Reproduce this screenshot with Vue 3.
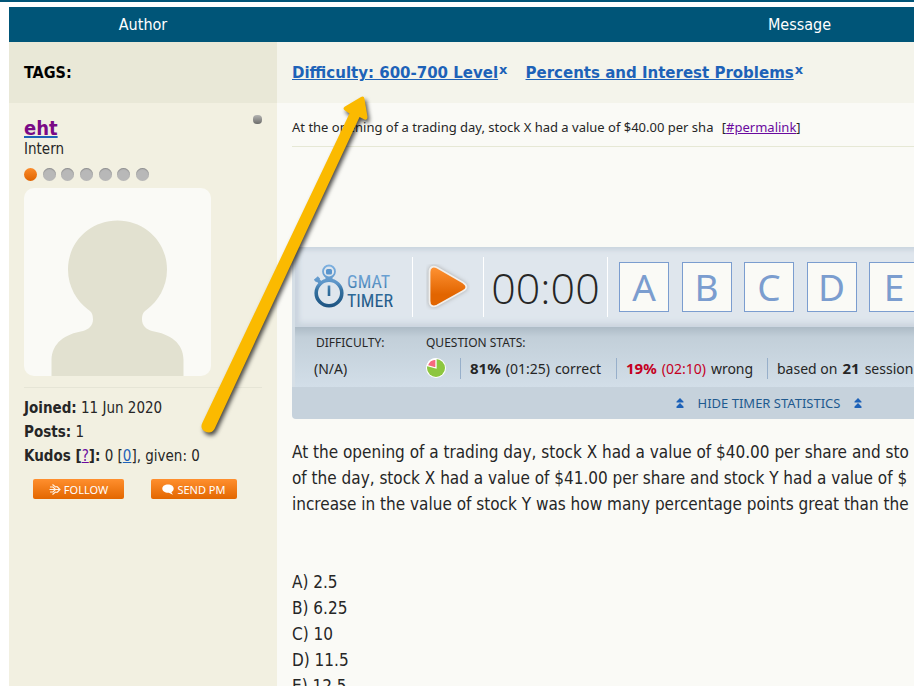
<script setup>
const tags = ['Difficulty: 600-700 Level', 'Percents and Interest Problems']
const letters = ['A', 'B', 'C', 'D', 'E']
const question = [
  'At the opening of a trading day, stock X had a value of $40.00 per share and sto',
  'of the day, stock X had a value of $41.00 per share and stock Y had a value of $',
  'increase in the value of stock Y was how many percentage points great than the'
]
const answers = ['A) 2.5', 'B) 6.25', 'C) 10', 'D) 11.5', 'E) 12.5']
</script>

<template>
  <div class="page">
    <div class="topline"></div>
    <main class="thread">
      <div class="head">Author</div>
      <div class="head">Message</div>

      <div class="tags-label">TAGS:</div>
      <div class="tags">
        <span v-for="t in tags" :key="t" class="tag"><a href="#" class="tag-link">{{ t }}</a><button type="button" class="tag-x">x</button></span>
      </div>

      <aside class="author">
        <div class="name-row">
          <a href="#" class="name">eht</a>
          <span class="offline"></span>
        </div>
        <div class="rank">Intern</div>
        <div class="dots">
          <span v-for="n in 7" :key="n" class="dot" :class="{ on: n === 1 }"></span>
        </div>
        <svg class="avatar" viewBox="0 0 187 188" aria-hidden="true">
          <rect width="187" height="188" rx="10" fill="#fafaf6" />
          <path fill="#e2e1d0" d="M93.500 32.500C121 32.500 143 54 143 81.500C143 99 134 113 123 121.500C119 124 118 127 118 131.500C118 137 122 141.500 128 143C146 146 159.500 155 159.500 172V188H27.500V172C28 155 41 146 59 143C65 141.500 69 137 69 131.500C69 127 68 124 64 121.500C53 113 44 99 44 81.500C44 54 66 32.500 93.500 32.500Z" />
        </svg>
        <div class="facts">
          <div><b>Joined:</b> 11 Jun 2020</div>
          <div><b>Posts:</b> 1</div>
          <div><b>Kudos [<a href="#" class="visited thin">?</a>]:</b> 0 [<a href="#">0</a>], given: 0</div>
        </div>
        <div class="actions">
          <button type="button" class="action follow">
            <svg width="12" height="11" viewBox="0 0 12 11" fill="none" stroke="#fff3e6" stroke-width="1.100" aria-hidden="true">
              <path d="M0.500 5.500H11M8 2.500L11 5.500L8 8.500M1 3H4L6.500 5.500L4 8H1M3.500 0.500L6.500 3L8 2.500M3.500 10.500L6.500 8L8 8.500" />
            </svg>
            FOLLOW
          </button>
          <button type="button" class="action pm">
            <svg width="12" height="11" viewBox="0 0 12 11" fill="#fff" aria-hidden="true">
              <path d="M6 0.500C9.300 0.500 11.700 2.100 11.700 4.600C11.700 6.300 10.700 7.500 9.400 8.200L11 10.700L6.800 8.800C3 9 0.300 7.200 0.300 4.600C0.300 2.100 2.700 0.500 6 0.500Z" />
            </svg>
            SEND PM
          </button>
        </div>
      </aside>

      <article class="post">
        <div class="subject">At the opening of a trading day, stock X had a value of $40.00 per sha <span class="perma">[<a href="#" class="visited">#permalink</a>]</span></div>

        <section class="timer">
          <div class="timer-top">
            <div class="logo">
              <svg width="80" height="46" viewBox="0 0 80 46" role="img" aria-label="GMAT Timer">
                <defs>
                  <linearGradient id="blue" gradientUnits="userSpaceOnUse" x1="0" y1="0" x2="0" y2="44">
                    <stop offset="0" stop-color="#7fb2e2" />
                    <stop offset="0.450" stop-color="#5b93c6" />
                    <stop offset="0.600" stop-color="#33709f" />
                    <stop offset="1" stop-color="#1d5280" />
                  </linearGradient>
                </defs>
                <g fill="none" stroke="url(#blue)">
                  <circle cx="15" cy="29" r="12.800" stroke-width="3.600" />
                  <circle cx="15" cy="7.500" r="6" stroke-width="1.800" />
                  <path d="M15 21.500V32" stroke-width="2.600" />
                  <path d="M1 17L5 13.500M3 15L7 19.500" stroke-width="3.600" />
                  <path d="M11.500 14.500H18.500" stroke-width="3" />
                </g>
                <rect x="12" y="5" width="6" height="5.500" rx="1.500" fill="#5a95cd" />
                <text x="33" y="24" class="logo-text" fill="url(#blue)">GMAT</text>
                <text x="33" y="43" class="logo-text" fill="url(#blue)">TIMER</text>
              </svg>
            </div>
            <div class="play">
              <button type="button" class="play-btn" aria-label="Start timer">
                <svg width="44" height="46" viewBox="0 0 44 46" aria-hidden="true">
                  <defs>
                    <linearGradient id="orange" x1="0" y1="0" x2="0" y2="1">
                      <stop offset="0" stop-color="#ff9334" />
                      <stop offset="0.700" stop-color="#e26500" />
                      <stop offset="1" stop-color="#e26500" />
                    </linearGradient>
                  </defs>
                  <path class="play-shape" d="M3.500 8C3.500 3 7 1.500 11 3.500L37 18.500C41.500 21.500 41.500 24.500 37 27L11 41.500C7 43.500 3.500 42 3.500 37Z" fill="url(#orange)" stroke="#f1efec" stroke-width="1.800" />
                </svg>
              </button>
            </div>
            <div class="clock">00:00</div>
            <div class="choices">
              <button v-for="l in letters" :key="l" type="button" class="choice">{{ l }}</button>
            </div>
          </div>

          <div class="stats">
            <div class="difficulty">
              <div class="stat-title">DIFFICULTY:</div>
              <div class="stat-line">(N/A)</div>
            </div>
            <div>
              <div class="stat-title">QUESTION STATS:</div>
              <div class="stat-line">
                <svg class="pie" width="20" height="20" viewBox="0 0 20 20" aria-hidden="true">
                  <circle cx="10" cy="10" r="10" fill="#fff" />
                  <circle cx="10" cy="10" r="9" fill="#8dc63f" />
                  <path d="M10 10V1A9 9 0 0 0 1.300 7.500Z" fill="#f6687f" stroke="#fff" stroke-width="1.300" />
                </svg>
                <span class="stat correct"><b>81%</b> <span class="time">(01:25)</span> correct</span>
                <span class="stat wrong"><b class="red">19%</b> <span class="time red">(02:10)</span> wrong</span>
                <span class="stat">based on <b>21</b> session</span>
              </div>
            </div>
          </div>

          <button type="button" class="toggle">
            <svg width="8" height="10" viewBox="0 0 8 10" fill="#1d62b8" aria-hidden="true"><path d="M4 0L7.500 3.500V4.500H0.500V3.500ZM4 5L7.500 8.500V10H0.500V8.500Z" /></svg>
            HIDE TIMER STATISTICS
            <svg width="8" height="10" viewBox="0 0 8 10" fill="#1d62b8" aria-hidden="true"><path d="M4 0L7.500 3.500V4.500H0.500V3.500ZM4 5L7.500 8.500V10H0.500V8.500Z" /></svg>
          </button>
        </section>

        <div class="body">
          <p><template v-for="q in question" :key="q">{{ q }}<br /></template></p>
          <p><template v-for="a in answers" :key="a">{{ a }}<br /></template></p>
        </div>
      </article>
    </main>

    <svg class="arrow" width="190" height="350" viewBox="190 90 190 350" aria-hidden="true">
      <path d="M202.500 422.500L349.500 113.500L345 110.500Q342 108.500 345 106.500L361 97Q364 95.500 364.500 99L367.500 117Q367.500 120.500 364.500 119.500L359.500 117L214.500 429Q211 434.500 205 431.500Q199.500 428 202.500 422.500Z" fill="#fbba00" />
    </svg>
  </div>
</template>

<style>
html {
  overflow: hidden auto;
  scrollbar-width: none;
}
body {
  margin: 0;
  background: #fff;
}
</style>

<style scoped>
.page {
  position: relative;
  min-width: 1331px;
  font-family: "DejaVu Sans Condensed", "Noto Sans", sans-serif;
  font-size: 15px;
  color: #262626;
}
.topline {
  height: 2px;
  background: #005578;
}
.thread {
  display: grid;
  grid-template-columns: 268px 1fr;
  margin: 5px 9px 0;
}
.head {
  background: #005578;
  color: #fff;
  text-align: center;
  font-size: 16px;
  padding-top: 1px;
  line-height: 34px;
}
a {
  color: #1d62b8;
}
.visited {
  color: #6a0a9e;
}
.thin {
  font-weight: 400;
}
button {
  font-family: inherit;
  border: 0;
  padding: 0;
  background: none;
  cursor: pointer;
}
.tags-label {
  background: #e9e8d7;
  padding: 1px 15px 0;
  font-size: 16px;
  font-weight: 700;
  line-height: 60px;
  color: #000;
}
.tags {
  display: flex;
  gap: 17px;
  padding: 1px 15px 0;
  background: #f4f4eb;
  font-family: "DejaVu Sans", sans-serif;
  font-weight: 700;
  line-height: 60px;
}
.tag-link {
  font-size: 15px;
}
.tag-x {
  font-family: "DejaVu Sans", sans-serif;
  font-size: 13px;
  font-weight: 700;
  color: #1d62b8;
  vertical-align: 4px;
  line-height: 12px;
  padding: 0 1px;
}
.author {
  background: #f2f0e1;
  padding: 12px 15px;
}
.name-row {
  display: flex;
  justify-content: space-between;
  line-height: 26px;
}
.name {
  font-size: 20px;
  font-weight: 700;
  color: #7a0a86;
  text-decoration-color: #1d62b8;
  text-decoration-thickness: 2px;
}
.offline {
  width: 9px;
  height: 9px;
  border-radius: 4px;
  background: linear-gradient(#b4b4b2, #6c6c6a);
}
.rank {
  line-height: 16px;
}
.dots {
  display: flex;
  justify-content: space-between;
  width: 125px;
  margin: 11px 0 7px;
}
.dot {
  width: 13px;
  height: 13px;
  border-radius: 50%;
  background: #b8b8b8;
  box-shadow: inset 0 1px 1px #8f8f8f;
}
.dot.on {
  background: linear-gradient(#fb8b2b, #e06400);
  box-shadow: none;
}
.avatar {
  display: block;
  width: 187px;
  height: 188px;
}
.facts {
  margin-top: 11px;
  padding-top: 8px;
  border-top: 1px solid #e6e5d6;
  line-height: 24px;
}
.actions {
  display: flex;
  gap: 27px;
  margin: 11px 9px;
}
.action {
  display: flex;
  align-items: center;
  justify-content: center;
  gap: 3px;
  height: 20px;
  border-radius: 2px;
  background: linear-gradient(#ff8f2e, #e36700);
  color: #fff;
  font-family: "Noto Sans", sans-serif;
  font-size: 11px;
}
.follow {
  width: 91px;
}
.pm {
  width: 86px;
}
.post {
  background: #fafaf6;
  padding: 5px 15px 20px;
}
.subject {
  line-height: 38px;
  border-bottom: 1px solid #e6e8d5;
  font-family: "Noto Sans", sans-serif;
  font-size: 13px;
}
.perma {
  margin-left: 5px;
}
.timer {
  width: 954px;
  margin-top: 100px;
  background: #c6d2dc;
  border-radius: 4px;
  overflow: hidden;
  font-family: "Noto Sans", sans-serif;
  font-size: 14px;
}
.timer-top {
  display: flex;
  align-items: center;
  height: 80px;
  border-left: 3px solid #d6dfe6;
  background: #dfe6ed;
  box-shadow: inset 0 3px 5px #cbd5df, inset 4px 0 5px #cbd5df, inset 0 -4px 6px #cbd5df;
}
.logo {
  display: flex;
  justify-content: center;
  width: 117px;
  height: 60px;
  align-items: center;
  border-right: 1px solid #fff;
}
.logo svg {
  overflow: visible;
}
.logo-text {
  font-family: "Roboto Condensed", "Open Sans Condensed", sans-serif;
  font-weight: 400;
  font-size: 18px;
}
.play {
  display: flex;
  align-items: center;
  justify-content: center;
  width: 70px;
  height: 60px;
  border-right: 1px solid #fff;
}
.play-btn {
  height: 46px;
}
.play-shape {
  filter: drop-shadow(0 0 2px #a9a9a9);
}
.clock {
  width: 123px;
  height: 60px;
  border-right: 1px solid #fff;
  text-align: center;
  font-family: "Open Sans", sans-serif;
  font-weight: 300;
  font-size: 43px;
  line-height: 61px;
}
.choices {
  display: flex;
  justify-content: space-between;
  width: 300px;
  margin-left: 11px;
}
.choice {
  width: 50px;
  height: 50px;
  border: 1px solid #7b9dcf;
  background: #fafaf6;
  color: #7b9dcf;
  font-size: 37px;
  line-height: 44px;
}
.stats {
  display: flex;
  height: 52px;
  padding-top: 8px;
  border-left: 3px solid #d6dfe6;
  background: linear-gradient(#adbbc6, #c2cfd9 10px, #d2dee8);
}
.difficulty {
  width: 112px;
  padding-left: 19px;
}
.stat-title {
  font-size: 12px;
  line-height: 16px;
}
.difficulty .stat-title {
  padding-left: 2px;
}
.stat-line {
  display: flex;
  align-items: center;
  height: 34px;
}
.pie {
  margin-right: 14px;
}
.stat {
  display: flex;
  align-items: center;
  gap: 5px;
  height: 21px;
  padding-left: 9px;
  border-left: 1px solid #97afca;
  white-space: nowrap;
}
.stat b {
  font-size: 15px;
}
.correct {
  width: 146px;
}
.wrong {
  width: 141px;
}
.red {
  color: #c4001f;
}
.toggle {
  display: flex;
  align-items: center;
  justify-content: center;
  gap: 14px;
  width: 100%;
  height: 32px;
  font-family: "Noto Sans", sans-serif;
  font-size: 13px;
  color: #1f5a8f;
}
.body {
  padding-top: 20px;
  font-size: 17px;
  line-height: 26px;
  white-space: nowrap;
}
.body p {
  margin: 0 0 52px;
}
.arrow {
  position: absolute;
  left: 190px;
  top: 90px;
  pointer-events: none;
  filter: drop-shadow(2px 3px 2px #000000b0);
}
</style>
